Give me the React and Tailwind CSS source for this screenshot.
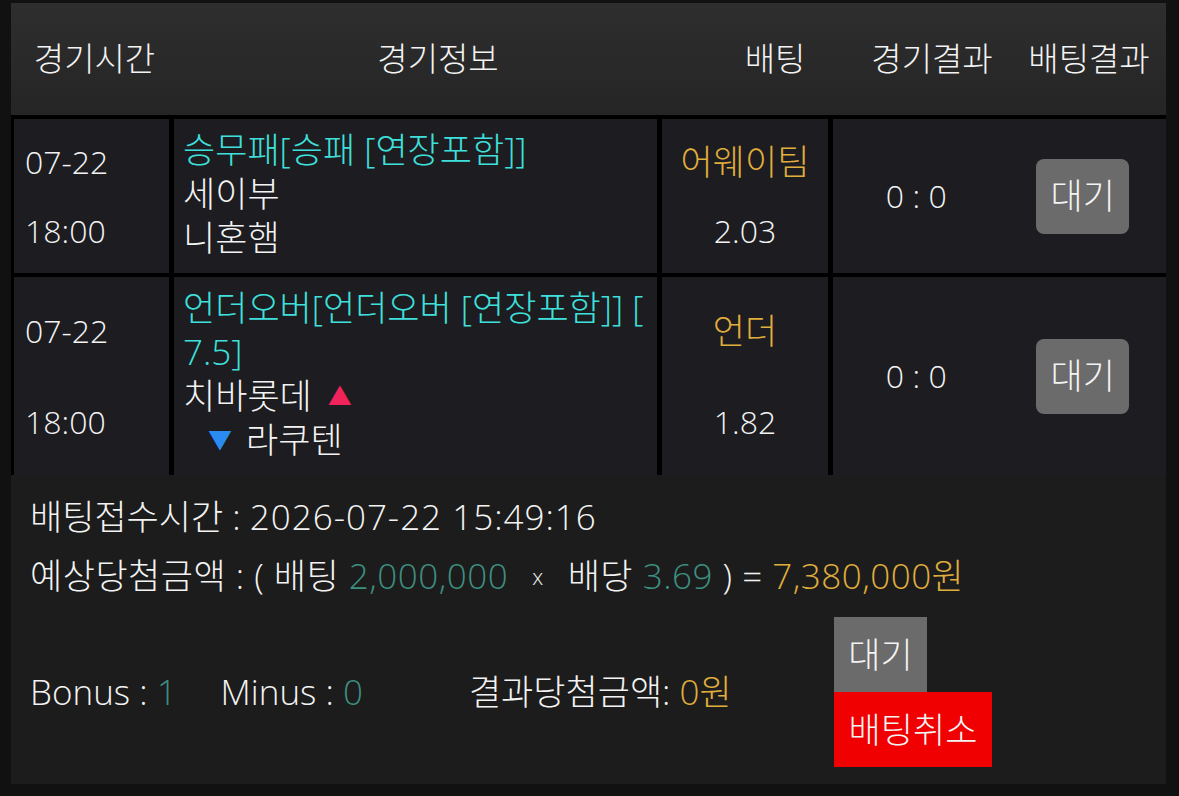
import React from "react";

const FONT = { fontFamily: '"Open Sans", "Noto Sans CJK KR", sans-serif' };

const BETS = [
  {
    date: "07-22",
    time: "18:00",
    market: ["승무패[승패 [연장포함]]"],
    home: "세이부",
    away: "니혼햄",
    pick: "어웨이팀",
    odds: "2.03",
    score: "0 : 0",
  },
  {
    date: "07-22",
    time: "18:00",
    market: ["언더오버[언더오버 [연장포함]] [", "7.5]"],
    home: "치바롯데",
    away: "라쿠텐",
    arrows: true,
    pick: "언더",
    odds: "1.82",
    score: "0 : 0",
  },
];

function HeaderCell({ w, children }) {
  return <div className={`${w} flex items-center justify-center`}>{children}</div>;
}

function BetRow({ bet }) {
  return (
    <div className="flex items-stretch gap-[5px] pl-[3px]">
      <div className="w-[155px] bg-[#1c1c21] flex flex-col justify-around py-[8px] pl-[11px] text-[32px]">
        <div>{bet.date}</div>
        <div>{bet.time}</div>
      </div>
      <div className="w-[483px] bg-[#1c1c21] pl-[9px] pt-[9px] pb-[13px]">
        <div className="text-[#3fe0dc]">
          {bet.market.map((m, i) => (
            <div key={i}>{m}</div>
          ))}
        </div>
        <div className="flex items-center">
          {bet.home}
          {bet.arrows && <span className="ml-[16px] text-[#f0245a] text-[24px]">▲</span>}
        </div>
        <div className={`flex items-center ${bet.arrows ? "pl-[25px]" : ""}`}>
          {bet.arrows && <span className="mr-[14px] text-[#2a8cf2] text-[24px]">▼</span>}
          {bet.away}
        </div>
      </div>
      <div className="w-[166px] bg-[#1c1c21] flex flex-col justify-around items-center py-[8px]">
        <div className="text-[#e0ae3c]">{bet.pick}</div>
        <div className="text-[32px]">{bet.odds}</div>
      </div>
      <div className="flex-1 bg-[#1c1c21] flex items-center">
        <div className="w-1/2 text-center text-[32px]">{bet.score}</div>
        <div className="w-1/2 flex justify-center">
          <div className="w-[93px] h-[75px] rounded-[8px] bg-[#6b6b6b] flex items-center justify-center">
            대기
          </div>
        </div>
      </div>
    </div>
  );
}

export default function App() {
  return (
    <div
      className="min-h-screen bg-[#111111] pt-[3px] pb-[12px] text-[#f3f3f3] text-[35px] leading-[44px] font-light"
      style={FONT}
    >
      <div className="ml-[11px] w-[1155px] flex flex-col">
        {/* column titles */}
        <div className="h-[112px] flex text-[33px] bg-gradient-to-b from-[#2e2e2e] to-[#252525]">
          <HeaderCell w="w-[167px]">경기시간</HeaderCell>
          <HeaderCell w="w-[520px]">경기정보</HeaderCell>
          <HeaderCell w="w-[154px]">배팅</HeaderCell>
          <HeaderCell w="w-[160px]">경기결과</HeaderCell>
          <HeaderCell w="w-[154px]">배팅결과</HeaderCell>
        </div>

        <div className="bg-black pt-[4px] flex flex-col gap-[4px]">
          {BETS.map((b, i) => (
            <BetRow key={i} bet={b} />
          ))}
        </div>

        {/* summary */}
        <div className="bg-[#1c1c1c] pl-[19px] pt-[20px] pb-[17px]">
          <div className="whitespace-pre">
            <span>배팅접수시간 : </span>
            <span className="tracking-[1px]">2026-07-22 15:49:16</span>
          </div>
          <div className="mt-[15px] flex items-center whitespace-pre tracking-[0.5px]">
            <span>예상당첨금액 : ( 배팅 </span>
            <span className="text-[#3d8f80]">2,000,000</span>
            <span className="mx-[24px] text-[22px]">x</span>
            <span>배당 </span>
            <span className="text-[#3d8f80]">3.69</span>
            <span> ) = </span>
            <span className="text-[#e0ae3c]">7,380,000원</span>
          </div>
          <div className="mt-[19px] flex items-center">
            <div className="w-[804px] flex items-center whitespace-pre">
              <span>Bonus : </span>
              <span className="text-[#3d8f80]">1</span>
              <span className="ml-[44px]">Minus : </span>
              <span className="text-[#3d8f80]">0</span>
              <span className="ml-[106px]">결과당첨금액: </span>
              <span className="text-[#e0ae3c]">0원</span>
            </div>
            <div className="flex flex-col items-start">
              <div className="w-[93px] h-[75px] bg-[#6b6b6b] flex items-center justify-center">대기</div>
              <div className="w-[158px] h-[75px] bg-[#f00000] flex items-center justify-center">배팅취소</div>
            </div>
          </div>
        </div>
      </div>
    </div>
  );
}
